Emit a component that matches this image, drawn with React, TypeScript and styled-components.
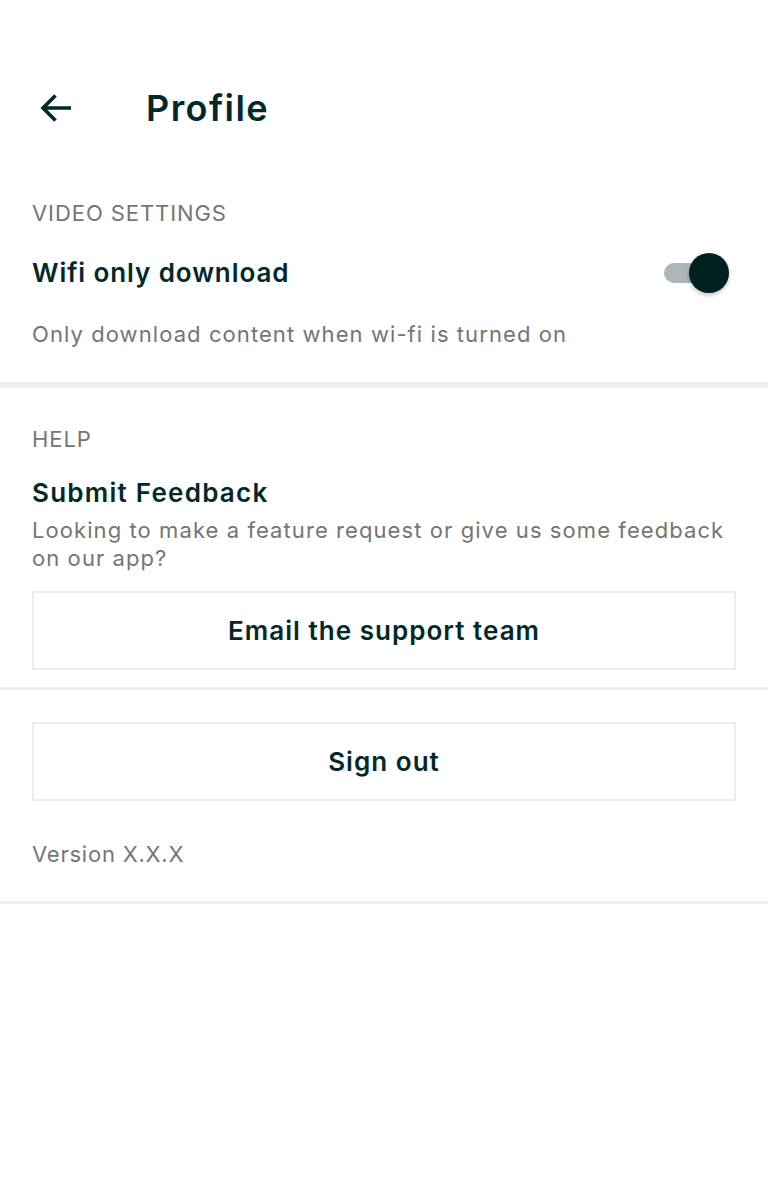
import React, { useState } from "react";
import styled, { createGlobalStyle } from "styled-components";

const Global = createGlobalStyle`
  html, body { margin: 0; padding: 0; background: #ffffff; }
  body { font-family: Inter, "Noto Sans", sans-serif; color: #01292b; }
  * { box-sizing: border-box; }
`;

const Page = styled.div`
  width: 768px;
  min-height: 1184px;
  background: #fff;
  display: flex;
  flex-direction: column;
`;

const Header = styled.header`
  display: flex;
  align-items: center;
  padding: 86px 0 0 40px;
  height: 130px;
`;

const BackButton = styled.button`
  border: none;
  background: none;
  padding: 0;
  width: 32px;
  height: 32px;
  display: flex;
  align-items: center;
  justify-content: center;
  color: #01292b;
  cursor: pointer;
`;

const Title = styled.h1`
  margin: 0 0 0 74px;
  font-size: 36px;
  line-height: 44px;
  font-weight: 600;
  letter-spacing: 0.04em;
  color: #01292b;
`;

const Section = styled.section<{ $top: number; $bottom: number }>`
  display: flex;
  flex-direction: column;
  padding: ${(p) => p.$top}px 32px ${(p) => p.$bottom}px;
`;

const Divider = styled.hr<{ $thick: number }>`
  margin: 0;
  border: none;
  height: ${(p) => p.$thick}px;
  background: #efefef;
`;

const Label = styled.div`
  font-size: 22px;
  line-height: 28px;
  letter-spacing: 0.042em;
  color: #757575;
  text-transform: uppercase;
`;

const ItemTitle = styled.div<{ $mt?: number; $spacing?: number }>`
  font-size: 26px;
  line-height: 32px;
  font-weight: 600;
  letter-spacing: ${(p) => p.$spacing ?? 0.035}em;
  color: #01292b;
  margin-top: ${(p) => p.$mt ?? 0}px;
`;

const Description = styled.p<{ $mt: number }>`
  margin: ${(p) => p.$mt}px 0 0;
  font-size: 22px;
  line-height: 28px;
  letter-spacing: 0.049em;
  color: #757575;
`;

const SettingRow = styled.div`
  display: flex;
  align-items: center;
  justify-content: space-between;
  margin-top: 25px;
  min-height: 40px;
  padding-top: 2px;
`;

const SwitchTrack = styled.button<{ $on: boolean }>`
  position: relative;
  width: 60px;
  height: 20px;
  margin-right: 12px;
  border: none;
  padding: 0;
  border-radius: 10px;
  background: ${(p) => (p.$on ? "#adb7b7" : "#d5d5d5")};
  cursor: pointer;
`;

const SwitchThumb = styled.span<{ $on: boolean }>`
  position: absolute;
  top: -10px;
  left: ${(p) => (p.$on ? "25px" : "-5px")};
  width: 40px;
  height: 40px;
  border-radius: 50%;
  background: ${(p) => (p.$on ? "#012021" : "#f5f5f5")};
  box-shadow: 0 2px 4px rgba(0, 0, 0, 0.25);
`;

const OutlineButton = styled.button<{ $mt: number }>`
  margin-top: ${(p) => p.$mt}px;
  width: 100%;
  height: 79px;
  border: 2px solid #ececec;
  background: #fff;
  font-family: Inter, "Noto Sans", sans-serif;
  font-size: 26px;
  font-weight: 600;
  letter-spacing: 0.04em;
  color: #01292b;
  cursor: pointer;
`;

const Version = styled.div`
  margin-top: 39px;
  font-size: 22px;
  line-height: 28px;
  letter-spacing: 0.035em;
  color: #757575;
`;

export default function App() {
  const [wifiOnly, setWifiOnly] = useState(true);
  return (
    <Page>
      <Global />
      <Header>
        <BackButton aria-label="Back">
          <svg width="32" height="30" viewBox="0 0 32 30" fill="none">
            <path
              d="M31 15H3M15.5 2.5L3 15l12.5 12.5"
              stroke="currentColor"
              strokeWidth="3.6"
              strokeLinecap="butt"
              strokeLinejoin="miter"
            />
          </svg>
        </BackButton>
        <Title>Profile</Title>
      </Header>

      <Section $top={69} $bottom={34}>
        <Label>Video settings</Label>
        <SettingRow>
          <ItemTitle>Wifi only download</ItemTitle>
          <SwitchTrack
            $on={wifiOnly}
            aria-label="Wifi only download"
            onClick={() => setWifiOnly(!wifiOnly)}
          >
            <SwitchThumb $on={wifiOnly} />
          </SwitchTrack>
        </SettingRow>
        <Description $mt={28}>Only download content when wi-fi is turned on</Description>
      </Section>
      <Divider $thick={6} />

      <Section $top={37} $bottom={17}>
        <Label>Help</Label>
        <ItemTitle $mt={24} $spacing={0.048}>Submit Feedback</ItemTitle>
        <Description $mt={7}>
          Looking to make a feature request or give us some feedback on our app?
        </Description>
        <OutlineButton $mt={19}>Email the support team</OutlineButton>
      </Section>
      <Divider $thick={3} />

      <Section $top={32} $bottom={33}>
        <OutlineButton $mt={0}>Sign out</OutlineButton>
        <Version>Version X.X.X</Version>
      </Section>
      <Divider $thick={3} />
    </Page>
  );
}
